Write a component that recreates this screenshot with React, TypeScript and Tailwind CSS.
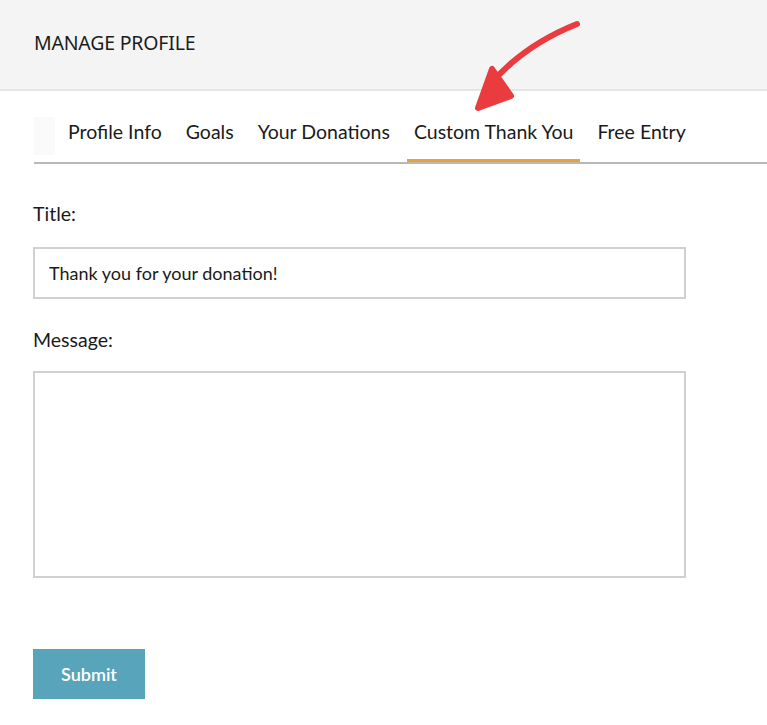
import React, { useState } from 'react';

const tabs = ['Profile Info', 'Goals', 'Your Donations', 'Custom Thank You', 'Free Entry'];

export default function App() {
  const [active, setActive] = useState('Custom Thank You');
  const [title, setTitle] = useState('Thank you for your donation!');
  const [message, setMessage] = useState('');

  return (
    <div className="relative w-[767px] h-[725px] bg-white overflow-hidden font-['Lato',sans-serif] text-[#1a1a1a]">
      {/* Header */}
      <div className="h-[91px] bg-[#f4f4f4] border-b-2 border-[#e6e6e6] flex items-center px-[34px]">
        <h1 className="text-[19.5px] tracking-[-0.2px] text-[#1c1c1c] font-['Noto_Sans',sans-serif] pb-[3px]">MANAGE PROFILE</h1>
      </div>

      {/* Tabs */}
      <div className="ml-[34px] mt-[26px] flex items-end border-b-2 border-[#b8b8b8] h-[47px]">
        <div className="w-[21px] h-[38px] bg-[#fafafa] self-start mr-[6px]" />
        {tabs.map((t) => (
          <button
            key={t}
            onClick={() => setActive(t)}
            className={`px-[7px] mr-[10px] h-[46px] pb-[12px] text-[19.5px] leading-none flex items-center border-b-[3px] ${
              active === t ? 'border-[#e8a23c]' : 'border-transparent'
            }`}
          >
            {t}
          </button>
        ))}
      </div>

      {/* Form */}
      <div className="px-[33px] pt-[40px]">
        <label className="block text-[19.5px] leading-none mb-[23px]">Title:</label>
        <input
          value={title}
          onChange={(e) => setTitle(e.target.value)}
          className="w-[653px] h-[52px] border-2 border-[#d0d0d0] px-[14px] text-[18px] outline-none"
        />
        <label className="block text-[19.5px] leading-none mt-[31px] mb-[22px]">Message:</label>
        <textarea
          value={message}
          onChange={(e) => setMessage(e.target.value)}
          className="block w-[653px] h-[207px] border-2 border-[#d0d0d0] p-[14px] text-[18px] outline-none resize-none"
        />
        <button className="mt-[71px] w-[112px] h-[50px] bg-[#58a5bb] text-white text-[18px] font-semibold">
          Submit
        </button>
      </div>

      {/* Annotation arrow */}
      <svg className="absolute left-0 top-0 pointer-events-none" width="767" height="725" viewBox="0 0 767 725">
        <path d="M489 86 Q 522 46 577 24" stroke="#ea3b3f" strokeWidth="6" fill="none" strokeLinecap="round" />
        <path d="M492 69 L 478 108 L 511 96 Z" fill="#ea3b3f" stroke="#ea3b3f" strokeWidth="6" strokeLinejoin="round" />
      </svg>
    </div>
  );
}
